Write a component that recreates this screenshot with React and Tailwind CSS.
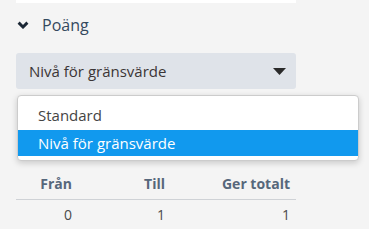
import React from 'react';

const ChevronDown = () => (
  <svg width="12" height="8" viewBox="0 0 12 8" className="shrink-0">
    <polyline points="1.6,1.6 6,6 10.4,1.6" fill="none" stroke="#1b2735" strokeWidth="2.9" />
  </svg>
);

const Caret = () => (
  <svg width="13" height="7" viewBox="0 0 13 7">
    <polygon points="0,0 13,0 6.5,7" fill="#2a2a2a" />
  </svg>
);

const rows = [{ from: 0, to: 1, total: 1 }];

export default function App() {
  return (
    <div className="relative w-full h-[229px] overflow-hidden bg-[#f4f4f4] font-['Open_Sans',sans-serif]">
      <div className="ml-[16px] w-[280px]">
        <div className="h-[3px] bg-white" />

        {/* Section header */}
        <div className="mt-[10px] flex items-center gap-[13px] pl-[1px] text-[16px] leading-[24px] text-[#34495e]">
          <ChevronDown />
          <span>Poäng</span>
        </div>

        {/* Select */}
        <div className="mt-[16px] h-[36px] rounded-[3px] bg-[#dfe3e9] flex items-center justify-between pl-[13px] pr-[10px]">
          <span className="text-[15px] leading-[36px] text-[#3b3536]">Nivå för gränsvärde</span>
          <Caret />
        </div>

        {/* Table */}
        <div className="mt-[85px]">
          <div className="grid grid-cols-[62px_93px_1fr] border-b border-[#cfd2d6] pb-[5px] text-[14px] leading-[20px] font-bold text-[#56677b]">
            <div className="text-right pr-[6px]">Från</div>
            <div className="text-right pr-[6px]">Till</div>
            <div className="text-right pr-[6px]">Ger totalt</div>
          </div>
          {rows.map((r, i) => (
            <div key={i} className="grid grid-cols-[62px_93px_1fr] pt-[5px] text-[14px] leading-[20px] text-[#4a4a4a]">
              <div className="text-right pr-[6px]">{r.from}</div>
              <div className="text-right pr-[6px]">{r.to}</div>
              <div className="text-right pr-[6px]">{r.total}</div>
            </div>
          ))}
        </div>
      </div>

      {/* Open dropdown menu */}
      <div className="absolute left-[17px] top-[95px] w-[342px] rounded-[4px] border border-[#cccccc] bg-white pt-[6px] pb-[4px] shadow-[0_2px_6px_rgba(0,0,0,0.18)] overflow-hidden">
        <div className="h-[26px] mb-[2px] pl-[20px] text-[15px] leading-[26px] text-[#444444]">Standard</div>
        <div className="h-[26px] pl-[20px] text-[15px] leading-[26px] text-white bg-[#1199ee]">Nivå för gränsvärde</div>
      </div>
    </div>
  );
}
